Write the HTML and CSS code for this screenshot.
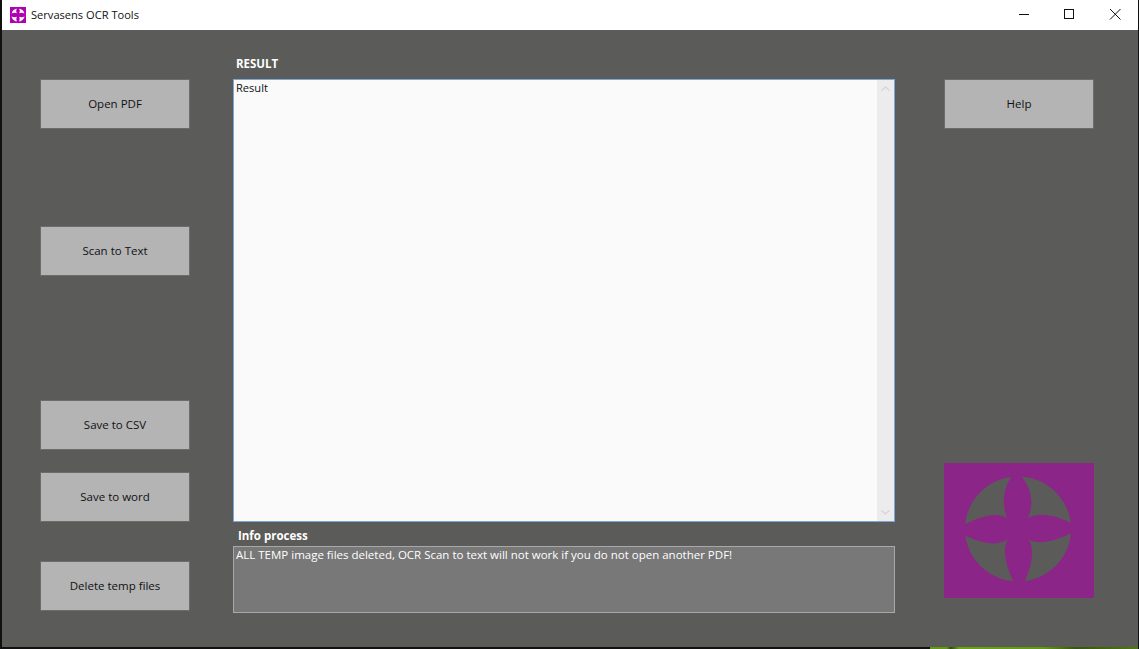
FILE: index.html
```html
<!DOCTYPE html>
<html lang="en">
<head>
<meta charset="utf-8">
<title>Servasens OCR Tools</title>
<link rel="stylesheet" href="styles.css">
</head>
<body>
<div class="desktop">
  <div class="window">
    <header class="titlebar">
      <svg class="app-icon" viewBox="0 0 150 150" aria-hidden="true">
        <rect width="150" height="150" fill="#b000b0"/>
        <circle cx="75" cy="75" r="62" fill="#fff"/>
        <path fill="#b000b0" d="M63 58Q53 35 65 10L75 3 85 10Q97 35 87 58Q110 48 140 63L147 75 140 87Q110 102 87 92Q97 115 85 140L75 147 65 140Q53 115 63 92Q40 102 10 87L3 75 10 63Q40 48 63 58Z"/>
      </svg>
      <span class="app-title">Servasens OCR Tools</span>
      <div class="controls">
        <svg class="control" viewBox="0 0 46 30" aria-hidden="true"><path d="M19 14.500h10" stroke="#111" fill="none"/></svg>
        <svg class="control" viewBox="0 0 46 30" aria-hidden="true"><rect x="18.500" y="9.500" width="9" height="9" stroke="#111" fill="none"/></svg>
        <svg class="control" viewBox="0 0 46 30" aria-hidden="true"><path d="M18 9l10.500 10.500M28.500 9 18 19.500" stroke="#111" fill="none"/></svg>
      </div>
    </header>
    <main class="content">
      <div class="col-left">
        <button class="btn btn-open">Open PDF</button>
        <button class="btn btn-scan">Scan to Text</button>
        <button class="btn btn-csv">Save to CSV</button>
        <button class="btn btn-word">Save to word</button>
        <button class="btn btn-delete">Delete temp files</button>
      </div>
      <div class="col-center">
        <div class="label label-result">RESULT</div>
        <div class="result-box">
          <div class="result-text">Result</div>
          <div class="scrollbar">
            <svg class="arrow" viewBox="0 0 9 5" aria-hidden="true"><path d="M.5 4.500 4.500 1l4 3.500" stroke="#d4d4d4" stroke-width="1.200" fill="none"/></svg>
            <svg class="arrow" viewBox="0 0 9 5" aria-hidden="true"><path d="M.5.500 4.500 4l4-3.500" stroke="#d4d4d4" stroke-width="1.200" fill="none"/></svg>
          </div>
        </div>
        <div class="label label-info">Info process</div>
        <div class="info-box">ALL TEMP image files deleted, OCR Scan to text will not work if you do not open another PDF!</div>
      </div>
      <div class="col-right">
        <button class="btn">Help</button>
        <svg class="logo" viewBox="0 0 150 135" aria-hidden="true">
          <rect width="150" height="135" fill="#8b2688"/>
          <ellipse cx="74" cy="66" rx="53" ry="52.500" fill="#5b5b59"/>
          <path fill="#8b2688" d="M63 55Q55 33 67 14L72.500 8 78 14Q93 33 84 55Q100 46.500 126.700 59.700L132 65 127.300 70.300Q99.400 83.800 84.700 77Q93 90 81 118L75 124 69.300 118.700Q56 90 63.700 76.300Q49.500 86 22 73L16 67 21.300 61Q49.700 47 63 55Z"/>
        </svg>
      </div>
    </main>
  </div>
  <div class="taskbar-strip"></div>
</div>
</body>
</html>
```

FILE: styles.css
```css
* { box-sizing: border-box; }
html, body { margin: 0; height: 100%; overflow: hidden; }
body { background: #111; font-family: "Open Sans", "Noto Sans", sans-serif; font-size: 11.5px; }

.desktop {
  width: 1139px;
  height: 649px;
  padding-left: 2px;
  padding-right: 1px;
  display: flex;
  flex-direction: column;
}
.window {
  height: 647px;
  background: #5b5b59;
  display: flex;
  flex-direction: column;
}
.taskbar-strip {
  height: 2px;
  margin-left: 928px;
  background: linear-gradient(90deg, #5f9a10 0, #5f9a10 8%, #2e4a0c 10%, #6aa512 14%, #5f9a10 55%, #36570a 70%, #4b7a0e 100%);
}

.titlebar {
  height: 30px;
  flex: none;
  background: #fff;
  display: flex;
  align-items: center;
  padding-left: 8px;
  color: #111;
}
.app-icon { width: 16px; height: 16px; margin-right: 5px; }
.app-title { font-size: 11.1px; margin-bottom: 2px; }
.controls { margin-left: auto; display: flex; }
.control { width: 46px; height: 30px; display: block; }

.content {
  flex: 1;
  display: flex;
  align-items: flex-start;
  padding-left: 38px;
}
.col-left {
  width: 150px;
  margin-right: 43px;
  padding-top: 49px;
  display: flex;
  flex-direction: column;
}
.btn {
  display: block;
  width: 150px;
  height: 50px;
  flex: none;
  background: #b4b4b4;
  border: 1px solid #6c6c6c;
  border-radius: 0;
  padding: 0 0 1px;
  font: inherit;
  color: #111;
  text-align: center;
}
.btn-scan { margin-top: 97px; }
.btn-csv { margin-top: 124px; }
.btn-word { margin-top: 22px; }
.btn-delete { margin-top: 39px; }

.col-center {
  width: 662px;
  margin-right: 49px;
  display: flex;
  flex-direction: column;
}
.label { color: #fff; font-weight: 700; font-size: 11.5px; line-height: 16px; }
.label-result { margin: 26px 0 0 3px; height: 23px; }
.label-info { margin: 6px 0 0 5px; height: 18px; }

.result-box {
  height: 443px;
  background: #fafafa;
  border: 1px solid #7aa6d8;
  display: flex;
}
.result-text { flex: 1; padding: 0 2px; color: #111; font-size: 11.1px; line-height: 16px; }
.scrollbar {
  width: 17px;
  background: #ececec;
  display: flex;
  flex-direction: column;
  justify-content: space-between;
  align-items: center;
  padding: 6px 0;
}
.arrow { width: 9px; height: 5px; display: block; }

.info-box {
  height: 67px;
  background: #787878;
  border: 1px solid #a8a8a8;
  color: #fff;
  padding: 0 2px;
  line-height: 16px;
}

.col-right {
  width: 150px;
  padding-top: 49px;
  display: flex;
  flex-direction: column;
}
.logo { width: 150px; height: 135px; margin-top: 334px; display: block; }
```
